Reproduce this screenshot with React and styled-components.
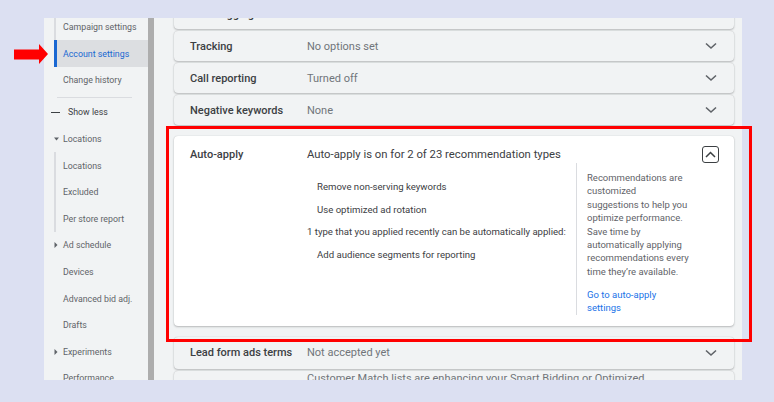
import React from "react";
import styled, { createGlobalStyle } from "styled-components";

const Global = createGlobalStyle`
  html, body { margin: 0; padding: 0; background: #dce0f2; }
  body { font-family: Roboto, "Noto Sans", Arial, sans-serif; }
  * { box-sizing: border-box; }
`;

const Page = styled.div`
  position: relative;
  width: 774px;
  height: 402px;
  padding: 18px 32px 0 44px;
  overflow: hidden;
`;

const Frame = styled.div`
  display: flex;
  width: 698px;
  height: 362px;
  overflow: hidden;
  background: #f1f3f4;
`;

const Sidebar = styled.nav`
  flex: none;
  width: 104px;
  background: #f1f3f4;
`;

const NavList = styled.div`
  margin-top: -4.3px;
  display: flex;
  flex-direction: column;
`;

const NavGroup = styled.div`
  margin-left: 10px;
  border-left: 2px solid #dadce0;
  display: flex;
  flex-direction: column;
`;

const NavItem = styled.div`
  height: 26.6px;
  flex: none;
  display: flex;
  align-items: center;
  font-size: 8.8px;
  white-space: nowrap;
  color: ${(p) => (p.$strong ? "#3c4043" : "#5f6368")};
  padding-left: ${(p) => p.$pl ?? 19}px;
`;

const SelectedItem = styled(NavItem)`
  margin-left: -2px;
  border-left: 3px solid #1967d2;
  padding-left: 6px;
  background: #dcdee1;
  color: #1967d2;
`;

const Caret = styled.span`
  width: 9px;
  flex: none;
  display: flex;
  align-items: center;
`;

const Dash = styled.span`
  width: 9px;
  height: 1.5px;
  background: #3c4043;
  margin-right: 8px;
  flex: none;
`;

const NavDivider = styled.div`
  height: 1px;
  flex: none;
  background: #dadce0;
  margin: 3.4px 16px 1.3px 13px;
`;

const Scrollbar = styled.div`
  flex: none;
  width: 6px;
  background: #adadad;
`;

const Main = styled.main`
  flex: 1;
  display: flex;
  flex-direction: column;
  gap: 2px;
  padding: 0 8px 0 20px;
`;

const Card = styled.section`
  flex: none;
  display: flex;
  align-items: ${(p) => (p.$top ? "flex-start" : "center")};
  height: ${(p) => p.$h ?? 30}px;
  margin-top: ${(p) => p.$mt ?? 0}px;
  padding: ${(p) => (p.$top ? "1px" : "0")} 17px 0 16px;
  background: #f1f3f4;
  border-radius: 4px;
  box-shadow: 0 1px 2px rgba(60, 64, 67, 0.3), 0 0 1px rgba(60, 64, 67, 0.25);
`;

const Label = styled.div`
  flex: none;
  width: 117px;
  font-size: 11px;
  font-weight: 500;
  color: #3c4043;
  white-space: nowrap;
`;

const Value = styled.div`
  flex: 1;
  max-width: ${(p) => p.$max ?? 9999}px;
  font-size: 11px;
  line-height: 13px;
  color: #70757a;
`;

const OpenCard = styled.section`
  flex: none;
  margin-top: 9px;
  display: grid;
  grid-template-columns: 117px 1fr 17px;
  grid-template-rows: 17px auto;
  align-items: center;
  padding: 10px 15px 11px 16px;
  background: #fff;
  border-radius: 4px;
  box-shadow: 0 1px 2px rgba(60, 64, 67, 0.3), 0 0 1px rgba(60, 64, 67, 0.25);
`;

const Summary = styled.div`
  font-size: 11.3px;
  color: #3c4043;
  white-space: nowrap;
`;

const CollapseButton = styled.button`
  width: 17px;
  height: 17px;
  padding: 0;
  border: 1.5px solid #3c4043;
  border-radius: 3px;
  background: #fff;
  display: flex;
  align-items: center;
  justify-content: center;
`;

const Body = styled.div`
  grid-column: 2 / 4;
  display: flex;
  align-self: stretch;
`;

const Types = styled.div`
  flex: none;
  width: 269px;
  padding-top: 13px;
  font-size: 9.6px;
  line-height: 22.7px;
  color: #3c4043;
`;

const TypeRow = styled.div`
  padding-left: ${(p) => (p.$indent ? 10 : 0)}px;
  white-space: nowrap;
`;

const Aside = styled.aside`
  flex: 1;
  border-left: 1px solid #dadce0;
  padding: 8px 0 0 10px;
  font-size: 9.5px;
  line-height: 13.4px;
  color: #5f6368;
  white-space: nowrap;
`;

const AsideText = styled.p`
  margin: 0 0 9.6px;
`;

const AsideLink = styled.a`
  color: #1a73e8;
  text-decoration: none;
`;

const RedBox = styled.div`
  position: absolute;
  left: 166px;
  top: 126px;
  width: 586px;
  height: 216px;
  border: 3px solid #ff0000;
  pointer-events: none;
`;

const Arrow = styled.svg`
  position: absolute;
  left: 14px;
  top: 44px;
`;

const ChevronDown = () => (
  <svg width="12" height="8" viewBox="0 0 12 8">
    <path d="M1 1.5 L6 6 L11 1.5" fill="none" stroke="#5f6368" strokeWidth="1.6" />
  </svg>
);

const ChevronUp = () => (
  <svg width="11" height="7" viewBox="0 0 11 7">
    <path d="M1 6 L5.5 1.5 L10 6" fill="none" stroke="#3c4043" strokeWidth="1.5" />
  </svg>
);

const CaretDown = () => (
  <svg width="5" height="4" viewBox="0 0 5 4">
    <path d="M0 0.5 H5 L2.5 3.5 Z" fill="#5f6368" />
  </svg>
);

const CaretRight = () => (
  <svg width="4" height="6" viewBox="0 0 4 6">
    <path d="M0.5 0 V6 L3.5 3 Z" fill="#5f6368" />
  </svg>
);

const rows = [
  { label: "Tracking", value: "No options set" },
  { label: "Call reporting", value: "Turned off" },
  { label: "Negative keywords", value: "None" },
];

export default function App() {
  return (
    <Page>
      <Global />
      <Frame>
        <Sidebar>
          <NavList>
            <NavGroup>
              <NavItem $pl={7}>Campaign settings</NavItem>
              <SelectedItem>Account settings</SelectedItem>
            </NavGroup>
            <NavItem>Change history</NavItem>
            <NavDivider />
            <NavItem $pl={7} $strong>
              <Dash />
              Show less
            </NavItem>
            <NavItem $pl={10}>
              <Caret>
                <CaretDown />
              </Caret>
              Locations
            </NavItem>
            <NavGroup>
              <NavItem $pl={7}>Locations</NavItem>
              <NavItem $pl={7}>Excluded</NavItem>
              <NavItem $pl={7}>Per store report</NavItem>
            </NavGroup>
            <NavItem $pl={10}>
              <Caret>
                <CaretRight />
              </Caret>
              Ad schedule
            </NavItem>
            <NavItem>Devices</NavItem>
            <NavItem>Advanced bid adj.</NavItem>
            <NavItem>Drafts</NavItem>
            <NavItem $pl={10}>
              <Caret>
                <CaretRight />
              </Caret>
              Experiments
            </NavItem>
            <NavItem>Performance</NavItem>
          </NavList>
        </Sidebar>
        <Scrollbar />
        <Main>
          <Card $mt={-19}>
            <Label>Auto-tagging</Label>
            <Value>Enabled</Value>
            <ChevronDown />
          </Card>
          {rows.map((r) => (
            <Card key={r.label}>
              <Label>{r.label}</Label>
              <Value>{r.value}</Value>
              <ChevronDown />
            </Card>
          ))}
          <OpenCard>
            <Label>Auto-apply</Label>
            <Summary>Auto-apply is on for 2 of 23 recommendation types</Summary>
            <CollapseButton aria-label="Collapse">
              <ChevronUp />
            </CollapseButton>
            <Body>
              <Types>
                <TypeRow $indent>Remove non-serving keywords</TypeRow>
                <TypeRow $indent>Use optimized ad rotation</TypeRow>
                <TypeRow>1 type that you applied recently can be automatically applied:</TypeRow>
                <TypeRow $indent>Add audience segments for reporting</TypeRow>
              </Types>
              <Aside>
                <AsideText>
                  Recommendations are
                  <br />
                  customized
                  <br />
                  suggestions to help you
                  <br />
                  optimize performance.
                  <br />
                  Save time by
                  <br />
                  automatically applying
                  <br />
                  recommendations every
                  <br />
                  time they’re available.
                </AsideText>
                <AsideLink href="#">
                  Go to auto-apply
                  <br />
                  settings
                </AsideLink>
              </Aside>
            </Body>
          </OpenCard>
          <Card $mt={9} $h={32}>
            <Label>Lead form ads terms</Label>
            <Value>Not accepted yet</Value>
            <ChevronDown />
          </Card>
          <Card $h={44} $top>
            <Label />
            <Value $max={350}>
              Customer Match lists are enhancing your Smart Bidding or Optimized targeting
            </Value>
          </Card>
        </Main>
      </Frame>
      <RedBox />
      <Arrow width="34" height="20" viewBox="0 0 34 20">
        <polygon points="0,5.5 25,5.5 25,0 34,10 25,20 25,15.5 0,15.5" fill="#ff0000" />
      </Arrow>
    </Page>
  );
}
